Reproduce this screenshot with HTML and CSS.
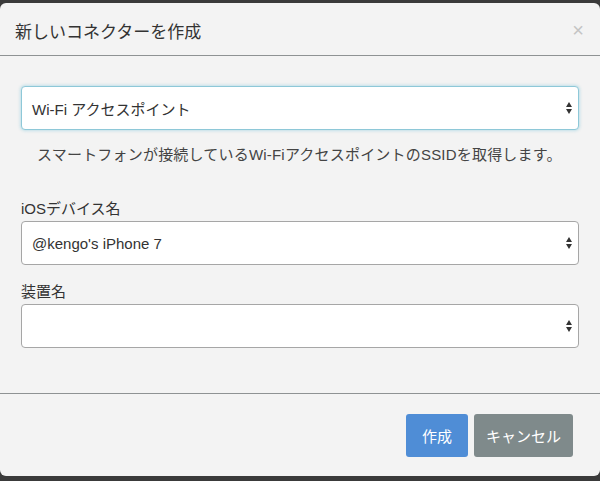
FILE: index.html
```html
<!DOCTYPE html>
<html lang="ja">
<head>
    <meta charset="UTF-8">
    <title>新しいコネクターを作成</title>
    <link rel="stylesheet" href="styles.css">
</head>
<body>
    <div class="modal">
        <div class="modal-header">
            <h4 class="modal-title">新しいコネクターを作成</h4>
            <span class="close">&times;</span>
        </div>
        <div class="modal-body">
            <div class="select focus">
                <span>Wi-Fi アクセスポイント</span>
                <span class="arrows"><i class="up"></i><i class="down"></i></span>
            </div>
            <p class="help">スマートフォンが接続しているWi-FiアクセスポイントのSSIDを取得します。</p>
            <label class="field-label">iOSデバイス名</label>
            <div class="select">
                <span>@kengo's iPhone 7</span>
                <span class="arrows"><i class="up"></i><i class="down"></i></span>
            </div>
            <label class="field-label">装置名</label>
            <div class="select">
                <span></span>
                <span class="arrows"><i class="up"></i><i class="down"></i></span>
            </div>
        </div>
        <div class="modal-footer">
            <a class="btn btn-primary">作成</a>
            <a class="btn btn-default">キャンセル</a>
        </div>
    </div>
</body>
</html>
```

FILE: styles.css
```css
body {
    margin: 0;
    padding: 0;
    background-color: #3a3a3a;
    font-family: "Liberation Sans", "Noto Sans CJK JP", sans-serif;
    color: #333;
    height: 481px;
    overflow: hidden;
}
.modal {
    margin-top: 3px;
    height: 473px;
    background-color: #f3f3f3;
    border-radius: 6px;
    display: flex;
    flex-direction: column;
}
.modal-header {
    border-bottom: 1px solid #8e9293;
    display: flex;
    align-items: center;
    justify-content: space-between;
    padding: 0 15px;
    box-sizing: border-box;
    height: 53px;
}
.modal-title {
    margin: 0;
    font-size: 17px;
    font-weight: normal;
    color: #333;
    padding-top: 2px;
}
.close {
    color: #c4c4c4;
    font-size: 20px;
    margin-right: 1px;
    padding-top: 2px;
}
.modal-body {
    padding: 30px 21px 0 21px;
    flex: 1;
    border-bottom: 1px solid #8e9293;
}
.select {
    height: 44px;
    box-sizing: border-box;
    background-color: #fff;
    border: 1px solid #a6a6a6;
    border-radius: 4px;
    display: flex;
    align-items: center;
    justify-content: space-between;
    padding: 0 6px 0 10px;
    font-size: 15px;
    color: #333;
}
.select.focus {
    border-color: #8ec8d8;
    box-shadow: 0 0 3px 1px rgba(130, 200, 220, 0.45);
}
.arrows {
    display: flex;
    flex-direction: column;
    gap: 2px;
}
.arrows i {
    width: 0;
    height: 0;
    border-left: 3.5px solid transparent;
    border-right: 3.5px solid transparent;
}
.arrows .up {
    border-bottom: 5px solid #333;
}
.arrows .down {
    border-top: 5px solid #333;
}
.help {
    margin: 15px 0 0 16px;
    font-size: 15px;
    line-height: 20px;
    letter-spacing: 0.2px;
    color: #444;
    height: 52px;
}
.field-label {
    display: block;
    font-size: 15px;
    color: #333;
    margin-bottom: 3px;
}
.select + .field-label {
    margin-top: 15px;
}
.modal-footer {
    height: 82px;
    display: flex;
    justify-content: flex-end;
    align-items: flex-start;
    padding: 20px 27px 0 0;
    box-sizing: border-box;
    gap: 6px;
}
.btn {
    height: 43px;
    display: flex;
    align-items: center;
    justify-content: center;
    border-radius: 3px;
    color: #fff;
    font-size: 15px;
}
.btn-primary {
    background-color: #4f8dd6;
    width: 62px;
}
.btn-default {
    background-color: #7f8a8b;
    width: 99px;
}
```
